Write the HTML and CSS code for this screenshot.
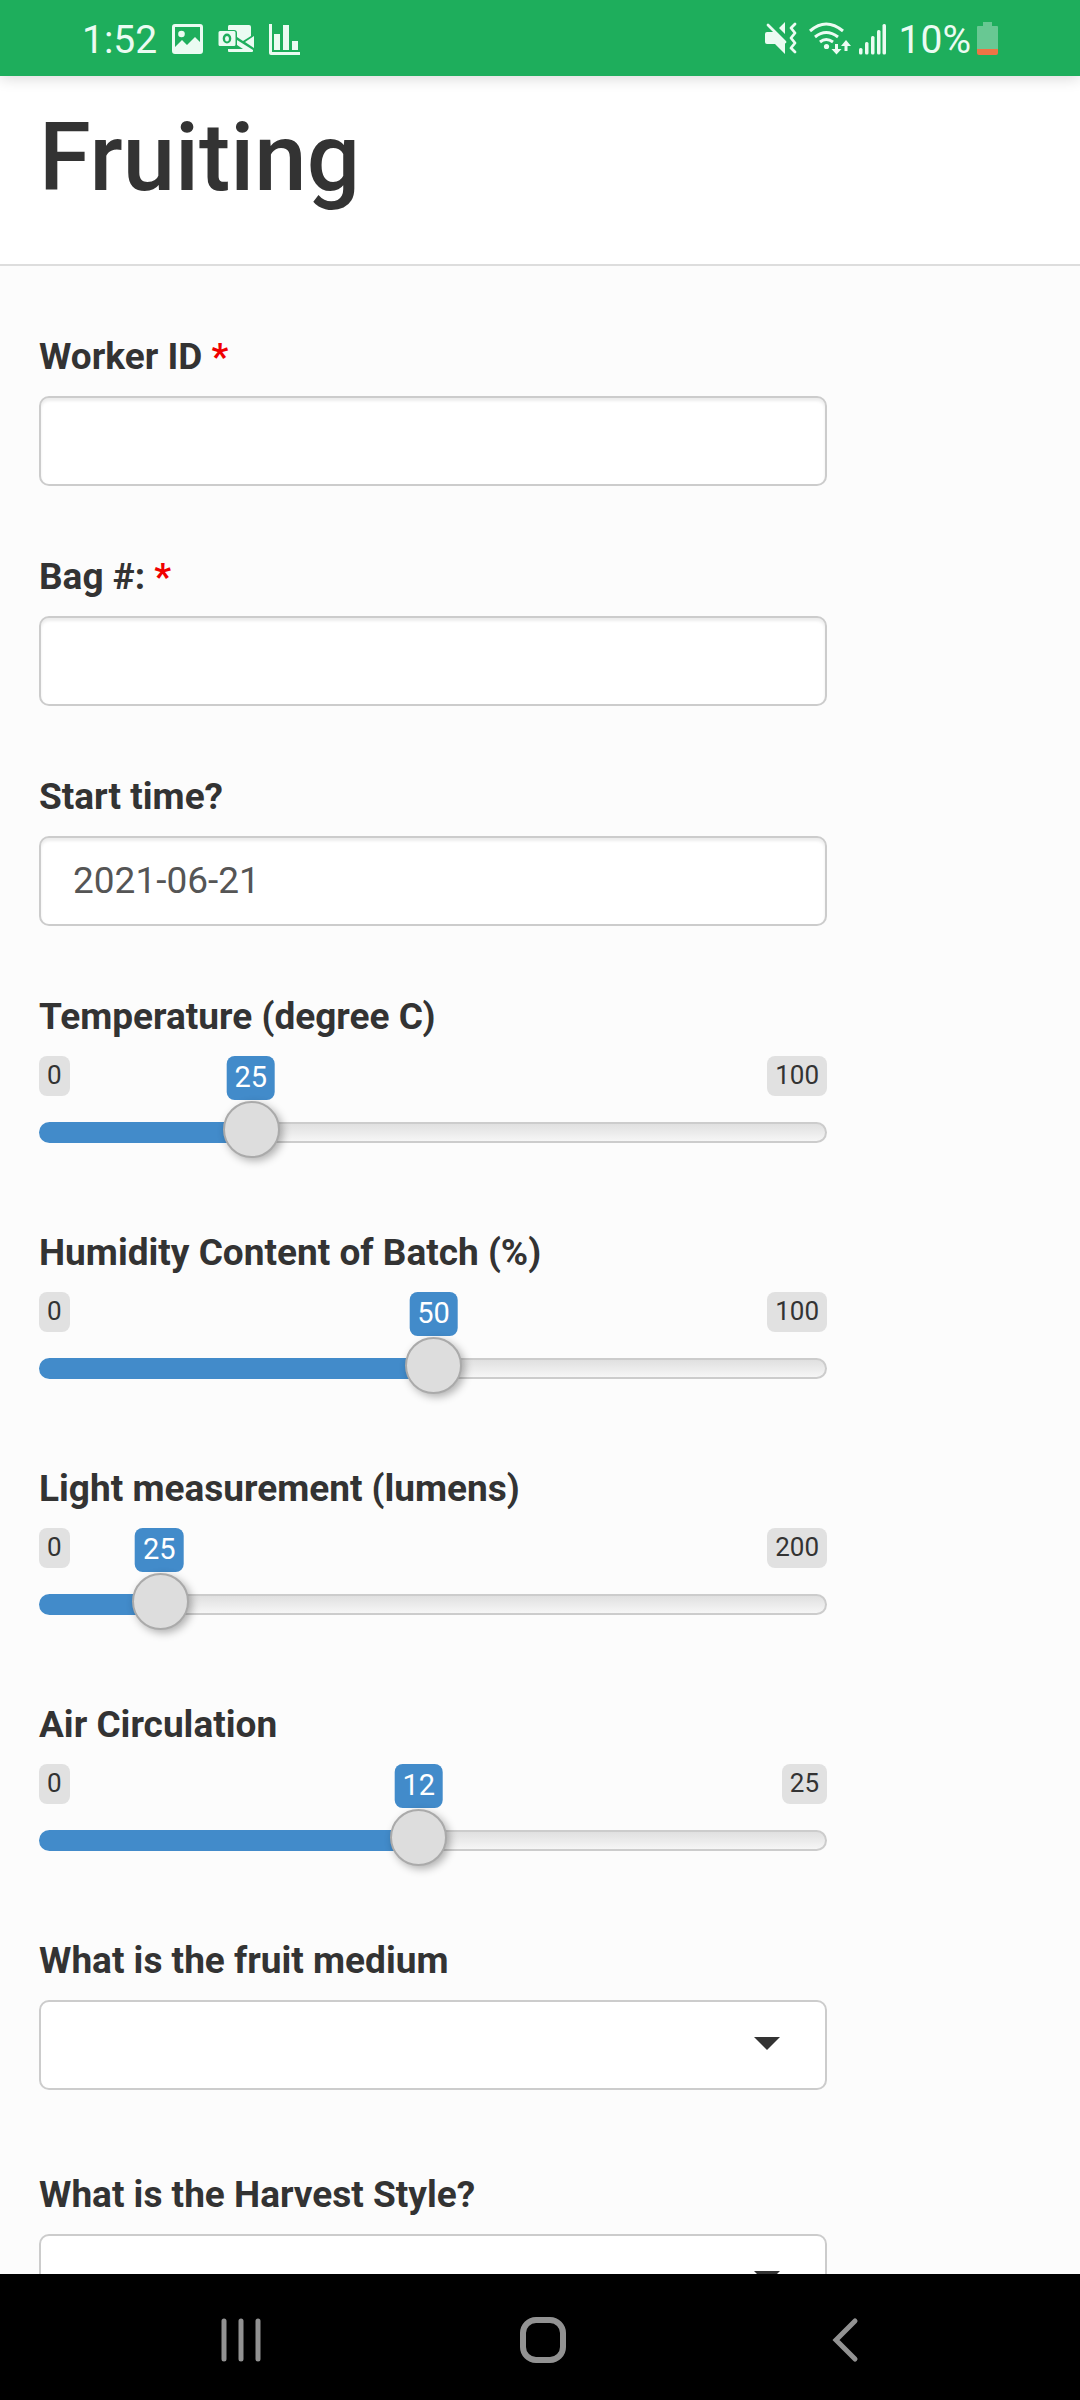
FILE: index.html
```html
<!DOCTYPE html>
<html lang="en">
<head>
<meta charset="utf-8">
<meta name="viewport" content="width=device-width, initial-scale=1">
<title>Fruiting</title>
<link rel="stylesheet" href="styles.css">
</head>
<body>
<div class="status-bar">
  <div class="status-group">
    <span class="clock">1:52</span>
    <svg class="status-icon" width="31" height="36" viewBox="173 21 31 36" aria-hidden="true">
      <path fill-rule="evenodd" d="M176 24h25a3 3 0 0 1 3 3v24a3 3 0 0 1-3 3h-25a3 3 0 0 1-3-3V27a3 3 0 0 1 3-3zM176 27v20l7-7 5 5 8-8 5 5V27z"/>
      <circle cx="182.500" cy="34" r="3.300"/>
    </svg>
    <svg class="status-icon" width="36" height="36" viewBox="217 21 36 36" aria-hidden="true">
      <path d="M228 25h20a2 2 0 0 1 2 2v9l-8 5-6-4v-4a3 3 0 0 0-3-3h-6v-3a2 2 0 0 1 1-2z"/>
      <path d="M253 36v12l-9-6zM236 40l16 10v1a1 1 0 0 1-1 1h-23a1 1 0 0 1-1-1v-2h15l-6-4z"/>
      <path fill-rule="evenodd" d="M219 31h14a1.500 1.500 0 0 1 1.500 1.500v12a1.500 1.500 0 0 1-1.500 1.500h-14a1.500 1.500 0 0 1-1.500-1.500v-12a1.500 1.500 0 0 1 1.500-1.500zM226 33.500a4.300 5 0 1 0 0 10 4.300 5 0 1 0 0-10zM226 36a2 2.700 0 1 1 0 5.400 2 2.700 0 1 1 0-5.400z"/>
    </svg>
    <svg class="status-icon" width="31" height="36" viewBox="267 21 31 36" aria-hidden="true">
      <path d="M267 24h3v28h28v3h-29a2 2 0 0 1-2-2zM272 34h6v16h-6zM281 25h6v25h-6zM290 41h6v9h-6z"/>
    </svg>
  </div>
  <div class="status-group status-group-end">
    <svg class="status-icon" width="37" height="36" viewBox="764 21 37 36" aria-hidden="true">
      <path d="M766 32h7l11 11v11l-10-10h-8a2 2 0 0 1-2-2v-8a2 2 0 0 1 2-2zM778 28l6-6v12z"/>
      <path class="stroke" stroke-width="2.800" d="M767 25l17 17M794 24l-4 4 4 5-4 5 4 5-4 5 4 4"/>
    </svg>
    <svg class="status-icon" width="45" height="36" viewBox="807 21 45 36" aria-hidden="true">
      <path class="stroke wave" stroke-width="3" d="M809 31q16-14 33 0M814 37q11-9 23 0M819 42q6-5 13 0"/>
      <circle cx="825.500" cy="46.500" r="2.600"/>
      <path d="M834 44h3v5h3.500l-5 5.500-5-5.500h3.500zM843.500 51h3v-5h3.500l-5-6-5 6h3.500z"/>
    </svg>
    <svg class="status-icon" width="34" height="36" viewBox="858 21 34 36" aria-hidden="true">
      <rect x="858" y="48" width="3.500" height="6.500" rx="1.500"/>
      <rect x="864" y="42" width="3.500" height="12.500" rx="1.500"/>
      <rect x="870" y="36" width="3.500" height="18.500" rx="1.500"/>
      <rect x="876" y="30" width="3.500" height="24.500" rx="1.500"/>
      <rect x="881.500" y="24" width="3.500" height="30.500" rx="1.500"/>
    </svg>
    <span class="battery-level">10%</span>
    <svg width="21" height="36" viewBox="977 21 21 36" aria-hidden="true">
      <path class="battery-body" d="M983 22h9v4h5a1 1 0 0 1 1 1v22h-21V27a1 1 0 0 1 1-1h5z"/>
      <path class="battery-charge" d="M977 49h21v4a2 2 0 0 1-2 2h-17a2 2 0 0 1-2-2z"/>
    </svg>
  </div>
</div>

<div class="screen">
  <header class="page-header">
    <h1 class="page-title">Fruiting</h1>
  </header>
  <form class="form">
    <div class="field">
      <label class="label" for="worker">Worker ID <span class="required">*</span></label>
      <input class="control" id="worker" type="text" required>
    </div>
    <div class="field">
      <label class="label" for="bag">Bag #: <span class="required">*</span></label>
      <input class="control" id="bag" type="text" required>
    </div>
    <div class="field">
      <label class="label" for="start">Start time?</label>
      <input class="control" id="start" type="text" value="2021-06-21">
    </div>
    <div class="field">
      <label class="label" for="temperature">Temperature (degree C)</label>
      <div class="slider" style="--ratio: 0.25">
        <div class="slider-scale"><span class="limit">0</span><span class="limit">100</span></div>
        <output class="slider-value" for="temperature">25</output>
        <input class="range" id="temperature" type="range" min="0" max="100" value="25">
      </div>
    </div>
    <div class="field">
      <label class="label" for="humidity">Humidity Content of Batch (%)</label>
      <div class="slider" style="--ratio: 0.5">
        <div class="slider-scale"><span class="limit">0</span><span class="limit">100</span></div>
        <output class="slider-value" for="humidity">50</output>
        <input class="range" id="humidity" type="range" min="0" max="100" value="50">
      </div>
    </div>
    <div class="field">
      <label class="label" for="light">Light measurement (lumens)</label>
      <div class="slider" style="--ratio: 0.125">
        <div class="slider-scale"><span class="limit">0</span><span class="limit">200</span></div>
        <output class="slider-value" for="light">25</output>
        <input class="range" id="light" type="range" min="0" max="200" value="25">
      </div>
    </div>
    <div class="field">
      <label class="label" for="air">Air Circulation</label>
      <div class="slider" style="--ratio: 0.48">
        <div class="slider-scale"><span class="limit">0</span><span class="limit">25</span></div>
        <output class="slider-value" for="air">12</output>
        <input class="range" id="air" type="range" min="0" max="25" value="12">
      </div>
    </div>
    <div class="field field-select">
      <label class="label" for="medium">What is the fruit medium</label>
      <div class="select">
        <select class="control control-flat" id="medium"><option value=""></option></select>
      </div>
    </div>
    <div class="field field-select">
      <label class="label" for="harvest">What is the Harvest Style?</label>
      <div class="select">
        <select class="control control-flat" id="harvest"><option value=""></option></select>
      </div>
    </div>
  </form>
</div>

<nav class="nav-bar" aria-label="System">
  <button class="nav-button" type="button" aria-label="Recent apps">
    <svg width="48" height="48" viewBox="0 0 48 48"><path stroke-width="5" d="M7 5v38M24 5v38M41 5v38"/></svg>
  </button>
  <button class="nav-button" type="button" aria-label="Home">
    <svg width="48" height="48" viewBox="0 0 48 48"><rect x="4" y="4" width="40" height="40" rx="13" stroke-width="6"/></svg>
  </button>
  <button class="nav-button" type="button" aria-label="Back">
    <svg width="48" height="48" viewBox="0 0 48 48"><path stroke-width="5" d="M34 5L15 24l19 19"/></svg>
  </button>
</nav>
</body>
</html>
```
FILE: styles.css
```css
* {
  box-sizing: border-box;
}

body {
  display: flex;
  flex-direction: column;
  height: 100vh;
  margin: 0;
  background: #fcfcfc;
  color: #333;
  font-family: Roboto, "Liberation Sans", sans-serif;
}

.status-bar {
  position: relative;
  display: flex;
  flex: none;
  justify-content: space-between;
  padding: 15px 82px 13px;
  background: #1eae5c;
  box-shadow: 0 2px 14px rgba(0, 0, 0, 0.16);
  color: #ebfbf2;
  font-size: 39px;
  line-height: 48px;
}

.status-group {
  display: flex;
  align-items: center;
  gap: 15px;
}

.status-group-end {
  gap: 6px;
}

.status-icon {
  fill: #ebfbf2;
}

.stroke {
  fill: none;
  stroke: #ebfbf2;
  stroke-linecap: round;
  stroke-linejoin: round;
}

.wave {
  stroke-linecap: butt;
}

.battery-body {
  fill: #68c893;
}

.battery-charge {
  fill: #ee7445;
}

.clock,
.battery-level {
  padding-top: 2px;
  line-height: 46px;
}

.screen {
  flex: 1;
  min-height: 0;
  overflow: hidden;
}

.page-header {
  padding: 30px 39px 54px;
  border-bottom: 2px solid #ddd;
  background: #fff;
}

.page-title {
  margin: 0;
  font-size: 94px;
  font-weight: 500;
  line-height: 104px;
}

.form {
  display: flex;
  flex-direction: column;
  gap: 64px;
  max-width: 866px;
  padding: 64px 39px;
}

.field {
  display: flex;
  flex-direction: column;
  gap: 12px;
}

.field-select {
  padding-bottom: 14px;
}

.label {
  font-size: 37px;
  font-weight: 700;
  line-height: 54px;
}

.required {
  color: #f00000;
}

.control {
  display: block;
  width: 100%;
  height: 90px;
  margin: 0;
  padding: 0 32px 2px;
  border: 2px solid #ccc;
  border-radius: 10px;
  appearance: none;
  background: #fff;
  box-shadow: inset 0 3px 3px rgba(0, 0, 0, 0.075);
  color: #555;
  font: 400 37px/52px Roboto, "Liberation Sans", sans-serif;
}

.control-flat {
  box-shadow: none;
}

.select {
  position: relative;
}

.select::after {
  content: "";
  position: absolute;
  top: 37px;
  right: 47px;
  border: 13px solid transparent;
  border-top-color: #333;
  border-bottom: 0;
  pointer-events: none;
}

.slider {
  position: relative;
  padding-bottom: 5px;
}

.slider-scale {
  display: flex;
  align-items: flex-start;
  justify-content: space-between;
  min-height: 52px;
}

.limit {
  padding: 1px 8px 2px;
  border-radius: 8px;
  background: #e1e1e1;
  font-size: 26px;
  line-height: 37px;
}

.slider-value {
  position: absolute;
  top: 0;
  left: calc(29px + var(--ratio) * (100% - 57px));
  padding: 0 8px 2px;
  border-radius: 8px;
  background: #428bca;
  color: #fff;
  font-size: 29px;
  line-height: 42px;
  transform: translateX(-50%);
}

.range {
  position: relative;
  display: block;
  width: 100%;
  height: 49px;
  margin: 0;
  appearance: none;
  background: none;
}

.range::-webkit-slider-runnable-track {
  box-sizing: border-box;
  height: 21px;
  border: 2px solid transparent;
  border-radius: 11px;
  background:
    linear-gradient(#428bca, #428bca) 0 0 / calc(var(--ratio) * 100%) 100% no-repeat border-box,
    linear-gradient(#e0e0e0, #f6f6f6) padding-box,
    linear-gradient(#ccc, #ccc) border-box;
}

.range::-webkit-slider-thumb {
  box-sizing: border-box;
  width: 57px;
  height: 57px;
  margin-top: -23px;
  border: 2px solid #aaa;
  border-radius: 50%;
  appearance: none;
  background: #ddd;
  box-shadow: 3px 3px 8px rgba(0, 0, 0, 0.3);
}

.nav-bar {
  position: relative;
  display: flex;
  flex: none;
  padding: 0 84px 0 90px;
  background: #000;
}

.nav-button {
  display: flex;
  flex: 1;
  justify-content: center;
  padding: 42px 0 36px;
  border: 0;
  background: none;
}

.nav-button svg {
  fill: none;
  stroke: #929292;
  stroke-linecap: round;
}
```
